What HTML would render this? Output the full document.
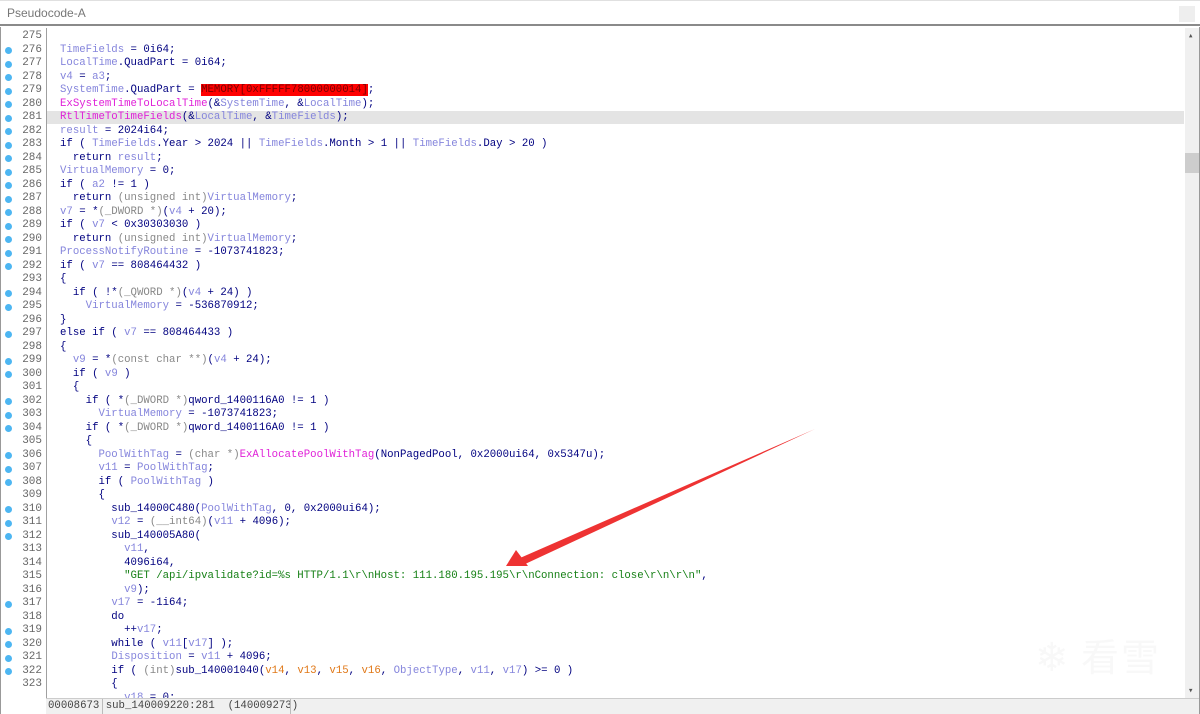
<!DOCTYPE html>
<html><head><meta charset="utf-8"><style>
body{margin:0;width:1200px;height:714px;background:#fff;overflow:hidden;position:relative;font-family:"Liberation Mono",monospace;}
#title{position:absolute;left:0;top:0;width:1200px;height:26px;background:#fff;border-top:1px solid #e0e0e0;border-bottom:2px solid #8a8a8a;box-sizing:border-box;}
#title span{position:absolute;left:7px;top:5px;font-family:"Liberation Sans",sans-serif;font-size:12px;color:#777;}
#tbtn{position:absolute;right:5px;top:5px;width:16px;height:16px;background:#eee;}
#frame{position:absolute;left:0;top:27px;width:1200px;height:687px;border-left:1px solid #999;border-right:1px solid #999;box-sizing:border-box;}
#sep{position:absolute;left:46px;top:28px;width:1px;height:670px;background:#a0a0a0;}
#hl{position:absolute;left:47px;top:111px;width:1137px;height:13px;background:#e4e4e4;}
.ln{position:absolute;left:0;width:42px;text-align:right;font-size:11px;color:#666;height:13.5px;line-height:13.5px;}
.dot{position:absolute;left:5px;width:7px;height:7px;border-radius:50%;background:#4db6f2;}
.c{position:absolute;left:60px;font-size:10.7px;white-space:pre;color:#000080;height:13.5px;line-height:13.5px;}
.v{color:#8585dc}.f{color:#e020d8}.o{color:#e07818}.s{color:#168016}.t{color:#888}
.red{background:#ff0000;color:#7a0000}
#sb{position:absolute;left:1185px;top:28px;width:14px;height:670px;background:#f0f0f0;}
#thumb{position:absolute;left:1185px;top:153px;width:14px;height:20px;background:#cdcdcd;}
#status{position:absolute;left:46px;top:698px;width:1153px;height:16px;background:#f0f0f0;border-top:1px solid #ccc;box-sizing:border-box;}
#status span{position:absolute;left:2px;top:1px;font-size:10.7px;color:#444;white-space:pre;}
#status i{position:absolute;left:244px;top:0;width:1px;height:15px;background:#bbb;}
#status b{position:absolute;left:56px;top:0;width:1px;height:15px;background:#bbb;}
#wm{position:absolute;left:1035px;top:625px;font-family:"Noto Sans CJK SC",sans-serif;font-size:38px;color:#f8f8f8;letter-spacing:2px;}
</style></head><body>
<div id="title"><span>Pseudocode-A</span><div id="tbtn"></div></div>
<div id="frame"></div>
<div id="hl"></div>
<div id="sep"></div>
<div id="code"></div>
<div id="wm"><span style="font-size:40px">❄</span> 看雪</div>
<div id="sb"><div style="position:absolute;left:3px;top:3px;font-size:9px;color:#555">▴</div><div style="position:absolute;left:3px;bottom:2px;font-size:9px;color:#555">▾</div></div>
<div id="thumb"></div>
<svg style="position:absolute;left:0;top:0" width="1200" height="714"><polygon points="815,429 520,558 523,565" fill="#ee3333"/><polygon points="506,566 516,550 528,566" fill="#ee3333"/></svg>
<div id="status"><span>00008673 sub_140009220:281  (140009273)</span><b></b><i></i></div>
<script>
var L=[
[275,0,''],
[276,1,'<span class=v>TimeFields</span> = 0i64;'],
[277,1,'<span class=v>LocalTime</span>.QuadPart = 0i64;'],
[278,1,'<span class=v>v4</span> = <span class=v>a3</span>;'],
[279,1,'<span class=v>SystemTime</span>.QuadPart = <span class=red>MEMORY[0xFFFFF78000000014]</span>;'],
[280,1,'<span class=f>ExSystemTimeToLocalTime</span>(&amp;<span class=v>SystemTime</span>, &amp;<span class=v>LocalTime</span>);'],
[281,1,'<span class=f>RtlTimeToTimeFields</span>(&amp;<span class=v>LocalTime</span>, &amp;<span class=v>TimeFields</span>);'],
[282,1,'<span class=v>result</span> = 2024i64;'],
[283,1,'if ( <span class=v>TimeFields</span>.Year &gt; 2024 || <span class=v>TimeFields</span>.Month &gt; 1 || <span class=v>TimeFields</span>.Day &gt; 20 )'],
[284,1,'  return <span class=v>result</span>;'],
[285,1,'<span class=v>VirtualMemory</span> = 0;'],
[286,1,'if ( <span class=v>a2</span> != 1 )'],
[287,1,'  return <span class=t>(unsigned int)</span><span class=v>VirtualMemory</span>;'],
[288,1,'<span class=v>v7</span> = *<span class=t>(_DWORD *)</span>(<span class=v>v4</span> + 20);'],
[289,1,'if ( <span class=v>v7</span> &lt; 0x30303030 )'],
[290,1,'  return <span class=t>(unsigned int)</span><span class=v>VirtualMemory</span>;'],
[291,1,'<span class=v>ProcessNotifyRoutine</span> = -1073741823;'],
[292,1,'if ( <span class=v>v7</span> == 808464432 )'],
[293,0,'{'],
[294,1,'  if ( !*<span class=t>(_QWORD *)</span>(<span class=v>v4</span> + 24) )'],
[295,1,'    <span class=v>VirtualMemory</span> = -536870912;'],
[296,0,'}'],
[297,1,'else if ( <span class=v>v7</span> == 808464433 )'],
[298,0,'{'],
[299,1,'  <span class=v>v9</span> = *<span class=t>(const char **)</span>(<span class=v>v4</span> + 24);'],
[300,1,'  if ( <span class=v>v9</span> )'],
[301,0,'  {'],
[302,1,'    if ( *<span class=t>(_DWORD *)</span>qword_1400116A0 != 1 )'],
[303,1,'      <span class=v>VirtualMemory</span> = -1073741823;'],
[304,1,'    if ( *<span class=t>(_DWORD *)</span>qword_1400116A0 != 1 )'],
[305,0,'    {'],
[306,1,'      <span class=v>PoolWithTag</span> = <span class=t>(char *)</span><span class=f>ExAllocatePoolWithTag</span>(NonPagedPool, 0x2000ui64, 0x5347u);'],
[307,1,'      <span class=v>v11</span> = <span class=v>PoolWithTag</span>;'],
[308,1,'      if ( <span class=v>PoolWithTag</span> )'],
[309,0,'      {'],
[310,1,'        sub_14000C480(<span class=v>PoolWithTag</span>, 0, 0x2000ui64);'],
[311,1,'        <span class=v>v12</span> = <span class=t>(__int64)</span>(<span class=v>v11</span> + 4096);'],
[312,1,'        sub_140005A80('],
[313,0,'          <span class=v>v11</span>,'],
[314,0,'          4096i64,'],
[315,0,'          <span class=s>"GET /api/ipvalidate?id=%s HTTP/1.1\\r\\nHost: 111.180.195.195\\r\\nConnection: close\\r\\n\\r\\n"</span>,'],
[316,0,'          <span class=v>v9</span>);'],
[317,1,'        <span class=v>v17</span> = -1i64;'],
[318,0,'        do'],
[319,1,'          ++<span class=v>v17</span>;'],
[320,1,'        while ( <span class=v>v11</span>[<span class=v>v17</span>] );'],
[321,1,'        <span class=v>Disposition</span> = <span class=v>v11</span> + 4096;'],
[322,1,'        if ( <span class=t>(int)</span>sub_140001040(<span class=o>v14</span>, <span class=o>v13</span>, <span class=o>v15</span>, <span class=o>v16</span>, <span class=v>ObjectType</span>, <span class=v>v11</span>, <span class=v>v17</span>) &gt;= 0 )'],
[323,0,'        {'],
[0,0,'          <span class=v>v18</span> = 0;']
];
var h='';
L.forEach(function(l,i){var y=30+i*13.5;
if(l[0])h+='<div class=ln style="top:'+y+'px">'+l[0]+'</div>';
if(l[1])h+='<div class=dot style="top:'+(y+3.5)+'px"></div>';
h+='<div class=c style="top:'+y+'px">'+l[2]+'</div>';});
document.getElementById('code').innerHTML=h;
</script>
</body></html>
